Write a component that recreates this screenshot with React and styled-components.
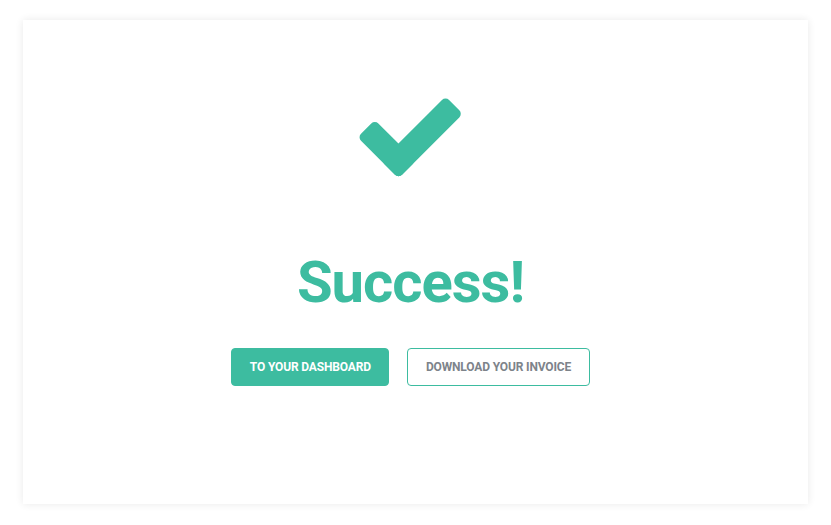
import React from "react";
import styled, { createGlobalStyle } from "styled-components";

const GlobalStyle = createGlobalStyle`
  body {
    margin: 0;
    background: #ffffff;
    font-family: Roboto, "Liberation Sans", sans-serif;
  }
`;

const Card = styled.div`
  margin: 20px 23px 21px;
  height: 484px;
  box-sizing: border-box;
  background: #ffffff;
  box-shadow: 0 0 8px rgba(0, 0, 0, 0.09);
  display: flex;
  flex-direction: column;
  align-items: center;
  padding: 75px 10px 0 0;
`;

const CheckIcon = styled.svg`
  width: 109px;
  height: 85px;
  display: block;
  fill: #3dbca0;
`;

const Title = styled.h1`
  margin: 73px 0 0;
  font-size: 58px;
  line-height: 1;
  font-weight: 700;
  letter-spacing: -1px;
  color: #3dbca0;
`;

const Actions = styled.div`
  display: flex;
  gap: 18px;
  margin-top: 37px;
`;

const Button = styled.button`
  height: 38px;
  padding: 0 17.5px;
  box-sizing: border-box;
  border-radius: 4px;
  border: 1px solid #3dbca0;
  background: ${(p) => (p.$primary ? "#3dbca0" : "#ffffff")};
  color: ${(p) => (p.$primary ? "#ffffff" : "#7d838a")};
  font-family: Roboto, "Liberation Sans", sans-serif;
  font-size: 12px;
  font-weight: 700;
  letter-spacing: -0.15px;
  text-transform: uppercase;
  cursor: pointer;
`;

const Check = () => (
  <CheckIcon viewBox="0 0 109 85">
    <g transform="translate(42.5 83.2) rotate(-45)">
      <rect x="0" y="-24.5" width="91" height="24.5" rx="5" />
      <rect x="0" y="-58" width="24.5" height="58" rx="5" />
    </g>
  </CheckIcon>
);

export default function App() {
  return (
    <>
      <GlobalStyle />
      <Card>
        <Check />
        <Title>Success!</Title>
        <Actions>
          <Button $primary>To your dashboard</Button>
          <Button>Download your invoice</Button>
        </Actions>
      </Card>
    </>
  );
}
